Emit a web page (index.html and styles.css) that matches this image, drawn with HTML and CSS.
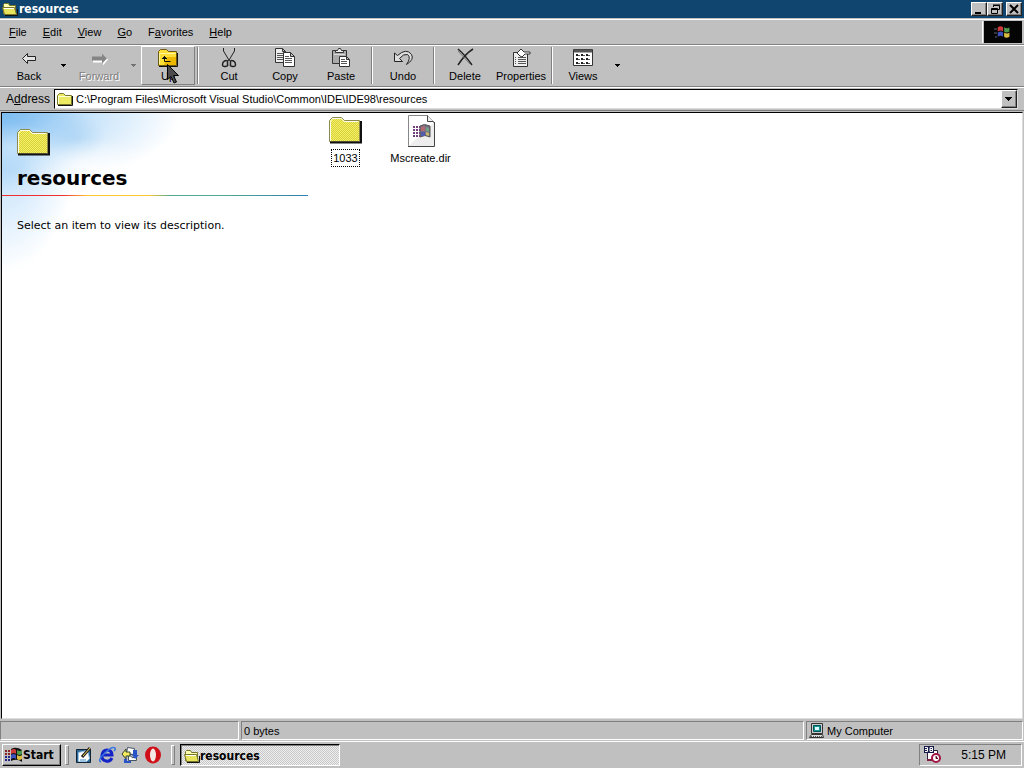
FILE: index.html
```html
<!DOCTYPE html>
<html lang="en">
<head>
<meta charset="utf-8">
<title>resources</title>
<link rel="stylesheet" href="styles.css">
</head>
<body>
<svg class="defs" aria-hidden="true">
  <defs>
    <pattern id="dither" width="2" height="2" patternUnits="userSpaceOnUse">
      <path fill="#f4f06a" d="M0 0h2v2H0z"/><path fill="#d8d238" d="M0 0h1v1H0zM1 1h1v1H1z"/>
    </pattern>
    <symbol id="folder" viewBox="0 0 33 28">
      <path fill="url(#dither)" stroke="#8c8a50" d="M.5 25.500V4.500l3-3h9l3 3h15v21z"/>
      <path fill="none" stroke="#fffff0" d="M1.500 25V5.500l2-3h9l3 3h14"/>
      <path fill="none" stroke="#111" stroke-width="2" d="M1 26.500h31V5"/>
    </symbol>
    <symbol id="small-folder" viewBox="0 0 16 14">
      <path fill="#ecea62" stroke="#77752a" d="M.5 12.500v-9l2-2h4l2 2h6v9z"/>
      <path fill="none" stroke="#ffffd8" d="M1.500 12V4.500h12"/>
      <path fill="none" stroke="#111" d="M1 13.500h14.500V4"/>
    </symbol>
    <symbol id="open-folder" viewBox="0 0 16 14">
      <path fill="#ffffb0" stroke="#77752a" d="M1.500 11.500v-9l1-1h4l1 2h6v8z"/>
      <path fill="#e8e35c" stroke="#77752a" d="M2.500 12.500l-2-7h12l2 7z"/>
      <path fill="none" stroke="#fff" d="M2 6.500h10"/>
      <path fill="none" stroke="#111" d="M3 13.500h12.500V7"/>
    </symbol>
    <symbol id="flag" viewBox="0 0 18 16">
      <path fill="#cf3b3b" d="M5 3q3-2 5 0v4q-2-2-5 0z"/><path fill="#4d9a4c" d="M11 3q3 2 5 0v4q-3 2-5 0z"/>
      <path fill="#3d51bd" d="M5 8q3-2 5 0v4q-2-2-5 0z"/><path fill="#d9bd42" d="M11 8q3 2 5 0v4q-3 2-5 0z"/>
    </symbol>
  </defs>
</svg>

<header class="titlebar">
  <svg class="title-icon" viewBox="0 0 16 14"><use href="#open-folder"/></svg>
  <span class="title-text">resources</span>
  <button class="caption" aria-label="Minimize"><svg viewBox="0 0 12 10"><path d="M2 8h6v2H2z"/></svg></button>
  <button class="caption" aria-label="Restore"><svg viewBox="0 0 12 10"><path fill="none" stroke="#000" d="M4.500 3V1.500h6v4H8M4 1h7M2.500 4.500h6v5h-6zM2 5.500h7"/></svg></button>
  <button class="caption caption-close" aria-label="Close"><svg viewBox="0 0 12 10"><path fill="none" stroke="#000" stroke-width="2" d="M2 1l8 8M10 1L2 9"/></svg></button>
</header>

<nav class="menubar">
  <button class="menu"><u>F</u>ile</button>
  <button class="menu"><u>E</u>dit</button>
  <button class="menu"><u>V</u>iew</button>
  <button class="menu"><u>G</u>o</button>
  <button class="menu">F<u>a</u>vorites</button>
  <button class="menu"><u>H</u>elp</button>
  <span class="brand"><svg viewBox="0 0 38 22"><path fill="#34343c" d="M10 7h3v2h-3zM10 11h3v2h-3zM11 15h2v2h-2z"/><g transform="translate(8 3)"><use href="#flag" width="20" height="17"/></g></svg></span>
</nav>

<div class="toolbar" role="toolbar">
  <button class="tool"><svg viewBox="0 0 20 20"><path fill="#e4e4e4" stroke="#222" d="M3.500 10.500l5-5v3h8v4h-8v3z"/></svg>Back</button>
  <button class="drop" aria-label="Back history"><svg viewBox="0 0 6 3"><path d="M0 0h5v1H4v1H3v1H2V2H1V1H0z"/></svg></button>
  <button class="tool" disabled><svg viewBox="0 0 20 20"><path fill="#fff" d="M19 11.500l-5-5v3H4v5h10v3z"/><path fill="#858585" d="M18 10.500l-5-5v3H3v4h10v3z"/></svg>Forward</button>
  <button class="drop" disabled aria-label="Forward history"><svg viewBox="0 0 6 3"><path d="M0 0h5v1H4v1H3v1H2V2H1V1H0z"/></svg></button>
  <span class="up-wrap">
    <button class="tool raised"><svg viewBox="0 0 20 20"><path fill="#ffdf35" stroke="#6c5a12" d="M.5 17.500v-14l2-2h6l2 2h8v14z"/><path fill="#edb900" d="M9 9h9v8H6z"/><path fill="none" stroke="#fff5a0" d="M1.500 16V5.500h16"/><path fill="none" stroke="#111" d="M1 18.500h18.500V5M6.500 8v5.500h6M4 10.500h5M5 9.500h3"/></svg>Up</button>
    <svg class="pointer" viewBox="0 0 12 20"><path fill="#4c4c4c" stroke="#000" d="M.5.500v15l3.500-3 3 6.500 2.500-1-3-6.500h5z"/></svg>
  </span>
  <span class="sep"></span>
  <button class="tool"><svg viewBox="0 0 20 20"><path fill="none" stroke="#222" d="M4.500 0v3l6 10M15.500 0v3l-6 10"/><path fill="none" stroke="#222" stroke-width="1.500" d="M8.500 13q-1-1-3 0t-2 3.500 3 2 2-2zM11.500 13q1-1 3 0t2 3.500-3 2-2-2z"/></svg>Cut</button>
  <button class="tool"><svg viewBox="0 0 20 20"><path fill="#eee" stroke="#333" d="M.5.500h7l3 3v11H.5zM7.500.500v3h3"/><path stroke="#555" d="M2 5.500h6M2 7.500h6M2 9.500h6M2 11.500h6"/><path fill="#fff" stroke="#333" d="M8.500 4.500h7l4 4v10h-11zM15.500 4.500v4h4"/><path stroke="#555" d="M10 8.500h4M10 10.500h7M10 12.500h7M10 14.500h7"/></svg>Copy</button>
  <button class="tool"><svg viewBox="0 0 20 20"><path fill="#aaa" stroke="#333" d="M1.500 2.500h14v13h-14z"/><path fill="#eee" stroke="#333" d="M4.500 4.500v-2h2l1-2h2l1 2h2v2z"/><path stroke="#ddd" d="M3 6.500h11"/><path fill="#fff" stroke="#333" d="M8.500 8.500h7l3 3v7h-10zM15.500 8.500v3h3"/><path stroke="#555" d="M10 11.500h4M10 13.500h6M10 15.500h6"/></svg>Paste</button>
  <span class="sep"></span>
  <button class="tool"><svg viewBox="0 0 20 20"><path fill="#ddd" stroke="#222" d="M1.500 5v8.500h8l-3-3q4-5 8-4 4 3-1 10 8-5 5-10-5-7-14 1z"/></svg>Undo</button>
  <span class="sep"></span>
  <button class="tool"><svg viewBox="0 0 20 20"><path fill="none" stroke="#222" stroke-width="1.500" d="M3 1q7 6 14 16M18 1Q10 6 3 17"/><path stroke="#777" d="M3 3l12 13"/></svg>Delete</button>
  <button class="tool"><svg viewBox="0 0 20 20"><path fill="#eee" stroke="#333" d="M2.500 4.500h14v14h-14z"/><path stroke="#555" d="M4 9.500h1M7 9.500h8M4 11.500h1M7 11.500h8M4 13.500h1M7 13.500h8M4 15.500h1M7 15.500h8"/><path fill="#fff" stroke="#333" d="M6 5l4-4 3 3h6v2h-5l-3 3-2-1z"/></svg>Properties</button>
  <span class="sep"></span>
  <button class="tool"><svg viewBox="0 0 20 20"><path fill="#fff" stroke="#333" d="M.5 1.500h19v16H.5z"/><path stroke="#555" stroke-width="3" d="M1 3h18"/><path stroke="#222" stroke-width="2" d="M3 7h2M8 7h2M13 7h2M3 11h2M8 11h2M13 11h2M3 15h2M8 15h2M13 15h2"/><path stroke="#555" d="M5 7.500h2M10 7.500h2M15 7.500h2M5 11.500h2M10 11.500h2M15 11.500h2M5 15.500h2M10 15.500h2M15 15.500h2"/></svg>Views</button>
  <button class="drop" aria-label="View options"><svg viewBox="0 0 6 3"><path d="M0 0h5v1H4v1H3v1H2V2H1V1H0z"/></svg></button>
</div>

<div class="addressbar">
  <label for="address">A<u>d</u>dress</label>
  <div class="combo">
    <svg class="combo-icon" viewBox="0 0 16 14"><use href="#small-folder"/></svg>
    <input id="address" type="text" value="C:\Program Files\Microsoft Visual Studio\Common\IDE\IDE98\resources">
    <button class="combo-button" aria-label="Show addresses"><svg viewBox="0 0 8 4"><path d="M0 0h7v1H6v1H5v1H4v1H3V3H2V2H1V1H0z"/></svg></button>
  </div>
</div>

<main class="view">
  <aside class="info">
    <div class="info-head">
      <svg class="big-icon" viewBox="0 0 33 28"><use href="#folder"/></svg>
      <h1>resources</h1>
    </div>
    <div class="rainbow"></div>
    <p>Select an item to view its description.</p>
  </aside>
  <section class="files">
    <a class="file" href="#folder-1033"><svg viewBox="0 0 33 32"><use href="#folder" y="1" width="33" height="28"/></svg><span class="focused">1033</span></a>
    <a class="file" href="#mscreate"><svg viewBox="0 0 33 32"><path fill="#fff" stroke="#888" d="M4.500.500h19l6 6v24h-25z"/><path fill="#eee" stroke="#444" d="M23.500.500v6h6M4 31.500h26.500V7"/><path fill="#777084" stroke="#555" d="M16 11q4-3 10 0v11q-5-3-10 0z"/><path fill="#b46872" d="M17 12q2-1 4 0v4h-4z"/><path fill="#6fa287" d="M22 12l3 1v4l-3-1z"/><path fill="#515caf" d="M17 17h4v4h-4z"/><path fill="#c5b86d" d="M22 17l3 1v3l-3-1z"/><path stroke="#74417f" stroke-width="2" stroke-dasharray="2 1" d="M9 12h7M9 15h7M9 18h7M9 21h7"/></svg><span>Mscreate.dir</span></a>
  </section>
</main>

<footer class="statusbar">
  <span class="pane pane-first"></span>
  <span class="pane pane-size">0 bytes</span>
  <span class="pane pane-zone"><svg viewBox="0 0 16 16"><path fill="#ccc" stroke="#333" d="M2.500.500h11v10h-11z"/><path fill="#16939c" stroke="#055" d="M4.500 2.500h7v6h-7z"/><path fill="#dff" d="M6 4h4v3H6z"/><path fill="#ddd" stroke="#333" d="M2.500 11.500h11l1 3h-14z"/><path stroke="#555" stroke-dasharray="1 1" d="M2 13.500h11"/></svg>My Computer</span>
</footer>

<footer class="taskbar">
  <button class="start"><svg viewBox="0 0 18 16"><path fill="#111" d="M6 2q5-3 11 1v12q-5-4-11-1z"/><use href="#flag" x="1" width="18" height="16"/><path stroke="#822" stroke-width="2" stroke-dasharray="2 1" d="M0 4h6M0 7h6"/><path stroke="#228" stroke-width="2" stroke-dasharray="2 1" d="M0 10h6M0 13h6"/></svg>Start</button>
  <span class="grip"></span>
  <button class="quick" aria-label="Show Desktop"><svg viewBox="0 0 18 18"><path fill="#29699c" stroke="#123" d="M1.500 3.500h14v13h-14z"/><path fill="#fff" stroke="#9cc4e4" d="M3.500 6.500l9-2 2 8-3 3h-8z"/><path fill="#9cc4e4" d="M5 13h6v2H5z"/><path stroke="#222" stroke-width="3" d="M7 11l8-9"/><path stroke="#eed35a" d="M8 10l7-8"/></svg></button>
  <button class="quick" aria-label="Internet Explorer"><svg viewBox="0 0 18 18"><path fill="none" stroke="#1323c5" stroke-width="3" d="M14 12q-2 4-6 3-5-1-4-6 1-5 5-5 5 0 5 5H5"/><path fill="none" stroke="#3976e2" stroke-width="1.500" d="M3 16q-4-2 4-9 7-7 10-5 1 1-1 3"/></svg></button>
  <button class="quick" aria-label="Outlook Express"><svg viewBox="0 0 18 18"><path fill="#fff" stroke="#456" d="M6.500 1.500l7 1-1 6-7-1zM7.500 8.500h8v6h-8zM8 9l4 3 3-3"/><path fill="#f5ed5b" stroke="#343" d="M1 8l4-5v3h4v4H5v3z"/><path fill="#2953c8" d="M12 4h4v5h2l-4 4-3-4h1zM3 13h3v2h4v2H3z"/></svg></button>
  <button class="quick" aria-label="Opera"><svg viewBox="0 0 18 18"><ellipse cx="9" cy="9" rx="8" ry="8.500" fill="#cf1018"/><ellipse cx="9" cy="9" rx="3" ry="6.500" fill="#f4e8e5"/></svg></button>
  <span class="grip grip-tasks"></span>
  <button class="task"><svg viewBox="0 0 16 14"><use href="#open-folder"/></svg>resources</button>
  <div class="tray">
    <svg viewBox="0 0 18 18"><path fill="#fff" stroke="#302040" d="M3.500 4.500h10v9h-10z"/><path fill="#171b4a" d="M0 0h10v7H0z"/><path fill="none" stroke="#fff" d="M1 1.500h2.500v4H1M1 3.500h2M6 1.500h2.500v4H6zM6 3.500h2"/><path stroke="#802040" stroke-width="2" d="M3 14h8"/><circle cx="12" cy="12" r="4" fill="#fff" stroke="#a01745" stroke-width="2"/><path stroke="#701333" d="M12 10v2.500h2"/></svg>
    <time>5:15 PM</time>
  </div>
</footer>
</body>
</html>
```
FILE: styles.css
```css
* { box-sizing: border-box; }
body {
  margin: 0;
  height: 100vh;
  display: flex;
  flex-direction: column;
  overflow: hidden;
  background: #c0c0c0;
  color: #000;
  font: 11px/16px "Liberation Sans", Arial, sans-serif;
}
button, input { font: inherit; color: inherit; }
button { padding: 0; border: 0; background: none; }
svg { display: block; flex: none; }
.defs { position: absolute; width: 0; height: 0; }

.titlebar {
  display: flex;
  align-items: center;
  flex: none;
  height: 18px;
  padding: 0 2px;
  background: #10456f;
  color: #fff;
}
.title-icon { width: 16px; height: 14px; margin-right: 1px; }
.title-text { flex: 1; font: bold 12px/16px "DejaVu Sans Condensed", sans-serif; }
.caption, .combo-button {
  background: #c0c0c0;
  border: 1px solid;
  border-color: #fff #222 #222 #fff;
  box-shadow: inset -1px -1px #808080;
}
.caption { width: 16px; height: 14px; padding: 1px; }
.caption svg { width: 12px; height: 10px; }
.caption-close { margin-left: 3px; }

.menubar {
  display: flex;
  align-items: center;
  flex: none;
  height: 26px;
  margin-top: 1px;
  padding-left: 1px;
  border-top: 1px solid #fff;
  border-bottom: 1px solid #808080;
}
.menu { padding: 0 8px; }
.brand { margin-left: auto; padding: 0 2px 0 1px; border-left: 1px solid #fff; }
.brand svg { width: 38px; height: 22px; background: #050505; }

.toolbar {
  display: flex;
  flex: none;
  height: 42px;
  padding: 0 0 1px 1px;
  border-top: 1px solid #fff;
  border-bottom: 1px solid #808080;
}
.tool {
  display: flex;
  flex-direction: column;
  align-items: center;
  width: 56px;
  padding-top: 2px;
}
.tool svg { width: 20px; height: 20px; }
.tool:disabled { color: #808080; text-shadow: 1px 1px #fff; }
.drop { width: 14px; }
.drop svg { width: 6px; height: 3px; margin: 0 auto; }
.drop:disabled { opacity: .4; }
.up-wrap { position: relative; display: flex; }
.raised {
  width: 54px;
  padding-top: 1px;
  border: 1px solid;
  border-color: #fff #808080 #808080 #fff;
}
.pointer { position: absolute; left: 26px; top: 18px; width: 12px; height: 20px; }
.sep { width: 2px; margin: 1px 2px; border-left: 1px solid #808080; border-right: 1px solid #fff; }

.addressbar {
  display: flex;
  align-items: center;
  flex: none;
  height: 24px;
  padding: 0 6px;
  border-top: 1px solid #fff;
  border-bottom: 1px solid #808080;
}
.addressbar label { width: 48px; font-size: 12px; }
.combo {
  display: flex;
  align-items: center;
  flex: 1;
  height: 20px;
  padding-left: 2px;
  background: #fff;
  border: 1px solid;
  border-color: #000 #ddd #ddd #000;
}
.combo-icon { width: 16px; height: 14px; }
.combo input { flex: 1; min-width: 0; padding: 0 3px; border: 0; outline: 0; background: none; }
.combo-button { width: 16px; height: 18px; }
.combo-button svg { width: 8px; height: 4px; margin: 0 auto; }

.view {
  display: flex;
  flex: 1;
  min-height: 0;
  margin: 1px 1px 0 1px;
  border: 1px solid;
  border-color: #000 #ddd #ddd #000;
  background: #fff;
}
.info {
  width: 306px;
  background:
    radial-gradient(ellipse 70px 30px at 90px 56px, #ffffffc0, #fff0),
    radial-gradient(ellipse 30px 24px at 74px 24px, #8fc4f060, #fff0),
    radial-gradient(ellipse 50px 24px at 10px 34px, #e0f1fd80, #fff0),
    radial-gradient(ellipse 180px 76px at 0 0, #7dbcf0, #a9d4f7a0 50%, #fff0),
    radial-gradient(ellipse 80px 150px at 0 10px, #8cc5f5, #b5dafa90 50%, #fff0);
}
.info-head { padding: 15px 15px 3px; }
.rainbow { height: 1px; background: linear-gradient(90deg, #f03030 0 20%, #ffc830 28% 48%, #4fa890 55% 72%, #2d7fb0); }
.big-icon { width: 33px; height: 28px; }
h1 { margin: 9px 0 0; font: bold 20px/27px "DejaVu Sans", sans-serif; }
.info p { margin: 22px 15px; font: 11px/16px "DejaVu Sans", sans-serif; }
.files { display: flex; align-items: flex-start; padding-top: 2px; }
.file {
  display: flex;
  flex-direction: column;
  align-items: center;
  gap: 2px;
  width: 75px;
  color: #000;
  text-decoration: none;
}
.file svg { width: 33px; height: 32px; }
.file span { padding: 0 1px; border: 1px solid transparent; }
.file .focused { border: 1px dotted #000; }

.statusbar {
  display: flex;
  flex: none;
  gap: 2px;
  height: 22px;
  padding: 2px 1px 1px 0;
}
.pane {
  display: flex;
  align-items: center;
  padding: 0 2px;
  border: 1px solid;
  border-color: #808080 #fff #fff #808080;
}
.pane-first { width: 239px; }
.pane-size { flex: 1; }
.pane-zone { width: 217px; gap: 2px; }
.pane svg { width: 16px; height: 16px; }

.taskbar {
  display: flex;
  align-items: center;
  flex: none;
  height: 27px;
  padding: 0 2px;
  border-top: 1px solid #fff;
}
.start {
  display: flex;
  align-items: center;
  width: 59px;
  height: 22px;
  padding-left: 2px;
  border: 1px solid;
  border-color: #fff #000 #000 #fff;
  box-shadow: inset -1px -1px #808080;
  font: bold 12px/16px "DejaVu Sans Condensed", sans-serif;
}
.start svg { width: 18px; height: 16px; }
.grip { width: 4px; height: 20px; margin: 0 3px 0 4px; border: 1px solid; border-color: #fff #808080 #808080 #fff; }
.grip-tasks { margin: 0 5px 0 7px; }
.quick { width: 23px; }
.quick svg { width: 18px; height: 18px; margin: 0 auto; }
.task {
  display: flex;
  align-items: center;
  width: 160px;
  height: 22px;
  padding: 1px 3px 0;
  border: 1px solid;
  border-color: #000 #fff #fff #000;
  box-shadow: inset 1px 1px #808080;
  background: repeating-conic-gradient(#eee 0 25%, #c8c8c8 0 50%) 0 0 / 2px 2px;
  font: bold 12px/16px "DejaVu Sans Condensed", sans-serif;
}
.task svg { width: 16px; height: 14px; }
.tray {
  display: flex;
  align-items: center;
  justify-content: space-between;
  width: 103px;
  height: 22px;
  margin-left: auto;
  padding: 0 15px 0 4px;
  border: 1px solid;
  border-color: #808080 #fff #fff #808080;
}
.tray svg { width: 18px; height: 18px; }
.tray time { font-size: 12px; }
```
